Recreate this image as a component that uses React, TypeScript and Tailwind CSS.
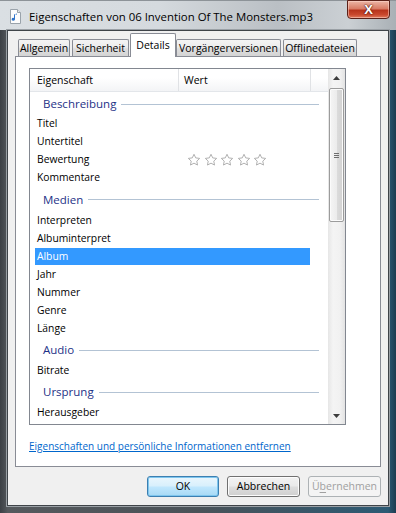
import React from 'react';

type Row = { label: string; group?: boolean; h?: string; selected?: boolean; stars?: boolean };

const rows: Row[] = [
  { label: 'Beschreibung', group: true, h: 'h-[22px]' },
  { label: 'Titel' },
  { label: 'Untertitel' },
  { label: 'Bewertung', stars: true },
  { label: 'Kommentare' },
  { label: 'Medien', group: true, h: 'h-[25px]' },
  { label: 'Interpreten' },
  { label: 'Albuminterpret' },
  { label: 'Album', selected: true },
  { label: 'Jahr' },
  { label: 'Nummer' },
  { label: 'Genre' },
  { label: 'Länge' },
  { label: 'Audio', group: true, h: 'h-[24px]' },
  { label: 'Bitrate' },
  { label: 'Ursprung', group: true, h: 'h-[24px]' },
  { label: 'Herausgeber' },
];

const tabs = [
  { label: 'Allgemein', cls: 'ml-[3px] w-[52px]' },
  { label: 'Sicherheit', cls: 'ml-[2px] w-[57px]' },
  { label: 'Details', cls: 'ml-[1px] w-[46px]', active: true },
  { label: 'Vorgängerversionen', cls: 'w-[105px]' },
  { label: 'Offlinedateien', cls: 'ml-[2px] w-[74px]' },
];

const Star = () => (
  <svg width="14" height="14" viewBox="0 0 24 24">
    <path
      d="M12 2.2l2.95 6.2 6.75.85-4.95 4.7 1.3 6.75L12 17.4l-6.05 3.3 1.3-6.75-4.95-4.7 6.75-.85z"
      fill="#fff"
      stroke="#ababab"
      strokeWidth="1.6"
      strokeLinejoin="round"
    />
  </svg>
);

const MusicIcon = () => (
  <svg width="11" height="15" viewBox="0 0 11 15">
    <path d="M0.5 0.5h7l3 3v11h-10z" fill="#fdfdfd" stroke="#9aa3ab" />
    <path d="M7.5 0.5v3h3" fill="#e6e9ec" stroke="#9aa3ab" />
    <path d="M5 5v5.2a1.7 1.4 0 1 1-1-1.2V5.5l3-1v1.2z" fill="#2f74c9" />
  </svg>
);

const Arrow = ({ up }: { up?: boolean }) => (
  <svg width="7" height="4" viewBox="0 0 7 4">
    <path d={up ? 'M0 4L3.5 0L7 4z' : 'M0 0L3.5 4L7 0z'} fill="#3c3c3c" />
  </svg>
);

const App = () => {
  return (
    <div className="relative w-[396px] h-[513px] overflow-hidden bg-[linear-gradient(90deg,#3c4045_0%,#55595d_2%,#4a5258_50%,#2c5a74_98%,#1d3c50_100%)] font-['Open_Sans','Noto_Sans',sans-serif] text-black">
      {/* title bar */}
      <div className="h-[30px] flex items-center bg-[linear-gradient(90deg,#dadfe3_0%,#d5dade_40%,#babfc4_70%,#cbd0d4_88%,#a9b0b5_100%)] border-t border-[#8d9398]">
        <div className="ml-[10px] mt-[2px] flex items-center">
          <MusicIcon />
        </div>
        <span className="ml-[8px] mt-[2px] text-[11.4px] leading-none text-black">
          Eigenschaften von 06 Invention Of The Monsters.mp3
        </span>
        <div className="ml-auto mr-[6px] self-start -mt-px w-[43px] h-[19px] rounded-b-[4px] border border-[#5a2119] bg-[linear-gradient(180deg,#ecb6a6_0%,#d87c66_45%,#b8341c_55%,#c9482d_80%,#e07a5c_100%)] flex items-center justify-center shadow-[inset_0_0_0_1px_rgba(255,220,210,0.5)]">
          <span className="text-white text-[13px] font-bold leading-none [text-shadow:0_0_2px_#4a120a,0_0_1px_#4a120a] font-['Liberation_Sans',sans-serif]">
            X
          </span>
        </div>
      </div>

      {/* client area */}
      <div className="ml-[7px] w-[382px] h-[476px] bg-[#f0f0f0] border border-[#3f4449] shadow-[0_0_0_1px_#9aa0a5]">
        {/* tabs */}
        <div className="relative z-10 h-[25px] ml-[7px] flex items-end text-[10.5px]">
          {tabs.map((t) =>
            t.active ? (
              <div
                key={t.label}
                className={`${t.cls} h-[24px] -mb-px bg-white border border-b-0 border-[#898c95] rounded-t-[2px] flex items-start justify-center pt-[4px]`}
              >
                {t.label}
              </div>
            ) : (
              <div
                key={t.label}
                className={`${t.cls} h-[17px] border border-b-0 border-[#898c95] rounded-t-[2px] bg-[linear-gradient(180deg,#f4f4f4_0%,#ececec_45%,#dedede_55%,#d4d4d4_100%)] flex items-center justify-center pt-[1px]`}
              >
                {t.label}
              </div>
            ),
          )}
        </div>

        {/* tab panel */}
        <div className="ml-[7px] w-[366px] h-[411px] bg-white border border-[#898c95] pt-[11px] pl-[13px]">
          <div className="w-[317px] h-[357px] border border-[#828790] flex">
            <div className="w-[298px] flex flex-col">
              {/* header */}
              <div className="h-[23px] flex border-b border-[#e3e6ea] bg-[linear-gradient(180deg,#ffffff_0%,#ffffff_40%,#f3f4f6_100%)] text-[10.5px]">
                <div className="w-[149px] border-r border-[#e0e2e5] flex items-center pl-[7px] pt-[2px]">Eigenschaft</div>
                <div className="w-[132px] border-r border-[#e0e2e5] flex items-center pl-[5px] pt-[2px]">Wert</div>
                <div className="flex-1" />
              </div>
              {/* rows */}
              <div className="flex flex-col">
                {rows.map((r) =>
                  r.group ? (
                    <div key={r.label} className={`${r.h} flex items-center pl-[13px] pr-[9px] pt-[2px]`}>
                      <span className="text-[11.5px] text-[#1e3287] leading-none">{r.label}</span>
                      <div className="flex-1 h-px bg-[#b3c3d4] ml-[5px]" />
                    </div>
                  ) : (
                    <div key={r.label} className="h-[18px] flex items-center pl-[5px]">
                      <div
                        className={`w-[275px] h-[17px] flex items-center pl-[2px] text-[10.3px] ${
                          r.selected ? 'bg-[#3399ff] text-white' : ''
                        }`}
                      >
                        <span className="w-[149px] pt-[2px]">{r.label}</span>
                        {r.stars && (
                          <div className="flex gap-[2.5px] ml-[1px] mt-[1px]">
                            <Star />
                            <Star />
                            <Star />
                            <Star />
                            <Star />
                          </div>
                        )}
                      </div>
                    </div>
                  ),
                )}
              </div>
            </div>

            {/* scrollbar */}
            <div className="w-[17px] flex flex-col bg-[linear-gradient(90deg,#e6e6e6_0%,#f4f4f4_30%,#f1f1f1_70%,#e3e3e3_100%)]">
              <div className="h-[17px] flex items-center justify-center">
                <Arrow up />
              </div>
              <div className="mt-[2px] mx-px h-[134px] rounded-[2px] border border-[#9c9c9c] bg-[linear-gradient(90deg,#f5f5f5_0%,#ececec_50%,#dcdcdc_51%,#d2d2d2_100%)] shadow-[inset_0_0_0_1px_#fbfbfb] flex flex-col items-center justify-center gap-[1px]">
                <div className="w-[5px] h-px bg-[#6e6e6e]" />
                <div className="w-[5px] h-px bg-[#6e6e6e]" />
                <div className="w-[5px] h-px bg-[#6e6e6e]" />
              </div>
              <div className="flex-1" />
              <div className="h-[17px] flex items-center justify-center">
                <Arrow />
              </div>
            </div>
          </div>

          <div className="mt-[12px] leading-[14px]">
            <a className="text-[10px] text-[#0066cc] underline underline-offset-[1px] cursor-pointer">
              Eigenschaften und persönliche Informationen entfernen
            </a>
          </div>
        </div>

        {/* buttons */}
        <div className="mt-[9px] pr-[7px] flex justify-end gap-[8px] text-[10.5px]">
          <button className="w-[72px] h-[21px] rounded-[3px] border border-[#3c7fb1] bg-[linear-gradient(180deg,#eaf6fd_0%,#d9f0fc_45%,#bee6fd_55%,#a7d9f5_100%)] shadow-[inset_0_0_0_1px_#7ec6ee]">
            OK
          </button>
          <button className="w-[73px] h-[21px] rounded-[3px] border border-[#707070] bg-[linear-gradient(180deg,#f2f2f2_0%,#ebebeb_45%,#dddddd_55%,#cfcfcf_100%)] shadow-[inset_0_0_0_1px_#fcfcfc]">
            Abbrechen
          </button>
          <button className="w-[73px] h-[21px] rounded-[3px] border border-[#adb2b5] bg-[#f4f4f4] text-[#a0a0a0]">
            Ü<span className="underline underline-offset-[2px]">b</span>ernehmen
          </button>
        </div>
      </div>
    </div>
  );
};

export default App;
